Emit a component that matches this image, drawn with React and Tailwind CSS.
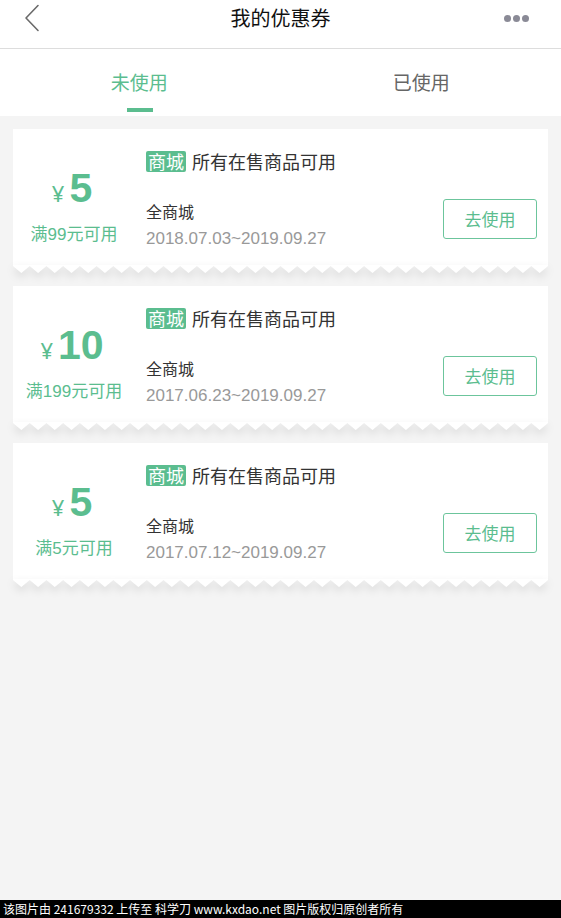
import React from "react";

const coupons = [
  { amt: "5", cond: "满99元可用", date: "2018.07.03~2019.09.27" },
  { amt: "10", cond: "满199元可用", date: "2017.06.23~2019.09.27" },
  { amt: "5", cond: "满5元可用", date: "2017.07.12~2019.09.27" },
];

const MIX = '"Liberation Sans", "Noto Sans CJK SC", sans-serif';

function zigzagPath() {
  const w = 535;
  const n = 32;
  const p = w / n;
  let d = `M0,0 L${w},0 L${w},1`;
  for (let i = n; i > 0; i--) {
    const x1 = i * p - p / 2;
    const x0 = (i - 1) * p;
    d += ` L${x1.toFixed(2)},8 L${x0.toFixed(2)},1`;
  }
  d += " Z";
  return d;
}
const ZZ = zigzagPath();

function Coupon({ c }) {
  return (
    <div className="flex flex-col w-[535px]">
      <div className="bg-white h-[136px] flex">
        <div className="w-[122px] flex flex-col items-center pt-[38px]">
          <div className="flex items-baseline h-[42px] text-[#5bbd8f] mr-[4px]">
            <span className="text-[22px] mr-[5px]" style={{ fontFamily: '"Noto Sans", sans-serif' }}>¥</span>
            <span className="text-[41px] font-bold leading-[42px]" style={{ fontFamily: '"Liberation Sans", Arial, sans-serif' }}>{c.amt}</span>
          </div>
          <div className="mt-[15px] text-[17px] leading-[22px] text-[#5bbd8f]" style={{ fontFamily: MIX }}>{c.cond}</div>
        </div>
        <div className="flex-1 flex flex-col pt-[21px] pl-[11px]">
          <div className="flex items-center h-[22px]">
            <span className="bg-[#5bbd8f] text-white text-[18px] leading-[21px] h-[21px] px-[2px] rounded-[2px]">商城</span>
            <span className="ml-[6px] text-[18px] text-[#333]">所有在售商品可用</span>
          </div>
          <div className="mt-[28px] text-[16px] leading-[22px] text-[#333]">全商城</div>
          <div className="mt-[6px] text-[17px] leading-[22px] text-[#999]" style={{ fontFamily: MIX }}>{c.date}</div>
        </div>
        <div className="pt-[70px] pr-[11px]">
          <div className="w-[94px] h-[40px] border-[1.5px] border-[#6cc59c] rounded-[3px] flex items-center justify-center text-[17px] text-[#5bbd8f]">
            去使用
          </div>
        </div>
      </div>
      <svg width="535" height="9" viewBox="0 0 535 9" className="block drop-shadow-[0_4px_4px_rgba(0,0,0,0.12)]">
        <path d={ZZ} fill="#ffffff" />
      </svg>
    </div>
  );
}

export default function App() {
  return (
    <div
      className="w-[561px] h-[918px] flex flex-col bg-[#f4f4f4] overflow-hidden"
      style={{ fontFamily: '"Noto Sans CJK SC", "Noto Sans", sans-serif' }}
    >
      <div className="bg-white h-[49px] border-b border-[#dddddd] shrink-0">
        <div className="h-[36px] flex items-center justify-between px-[24px] relative">
          <svg width="16" height="28" viewBox="0 0 16 28" className="block">
            <polyline points="14,1.5 2,14 14,26.5" fill="none" stroke="#6a6a6a" strokeWidth="1.6" strokeLinecap="round" strokeLinejoin="round" />
          </svg>
          <div className="absolute left-0 right-0 text-center text-[20px] text-[#111] pointer-events-none">我的优惠券</div>
          <div className="flex gap-[2px] mr-[8px]">
            <span className="w-[7px] h-[7px] rounded-full bg-[#8a8a96]" />
            <span className="w-[7px] h-[7px] rounded-full bg-[#8a8a96]" />
            <span className="w-[7px] h-[7px] rounded-full bg-[#8a8a96]" />
          </div>
        </div>
      </div>
      <div className="bg-white h-[67px] shrink-0 flex">
        <div className="flex-1 flex flex-col items-center">
          <div className="pt-[21px] text-[19px] leading-[24px] text-[#5bbd8f] pr-[2px]">未使用</div>
          <div className="mt-[14px] w-[26px] h-[4px] bg-[#5bbd8f]" />
        </div>
        <div className="flex-1 flex flex-col items-center">
          <div className="pt-[21px] text-[19px] leading-[24px] text-[#666] pl-[1px]">已使用</div>
        </div>
      </div>
      <div className="flex-1 flex flex-col items-center pt-[13px] gap-[12px]">
        {coupons.map((c, i) => (
          <Coupon key={i} c={c} />
        ))}
      </div>
      <div className="h-[18px] bg-black shrink-0 flex items-center pl-[3px] text-white text-[12px] leading-[18px] whitespace-pre" style={{ fontFamily: '"Noto Sans CJK SC", sans-serif' }}>
        该图片由 241679332 上传至 科学刀 www.kxdao.net 图片版权归原创者所有
      </div>
    </div>
  );
}
